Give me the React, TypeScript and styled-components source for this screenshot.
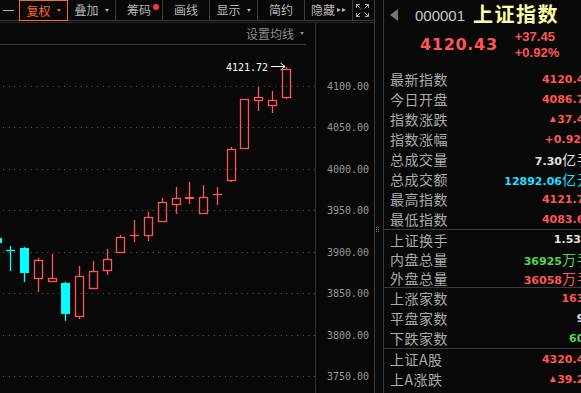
import styled, { createGlobalStyle } from 'styled-components';

const RED = '#ff5555';
const CYAN = '#00ffff';
const GREEN = '#4fd84f';
const WHITE = '#e2e2e2';
const SKY = '#1fe0ff';

const GlobalStyle = createGlobalStyle`
  html, body { margin: 0; padding: 0; background: #080808; overflow: hidden; }
`;

const Screen = styled.div`
  display: flex;
  width: max-content;
  height: 393px;
  overflow: hidden;
  background: #080808;
  font-family: "Noto Sans CJK SC", sans-serif;
`;

const LeftPane = styled.div`
  width: 375px;
  flex: none;
  display: flex;
  flex-direction: column;
  box-sizing: border-box;
  border-right: 1px solid #3a3a3a;
`;

const Toolbar = styled.div`
  display: flex;
  align-items: flex-start;
  height: 21px;
  box-sizing: border-box;
  border-bottom: 1px solid #3c3c3c;
`;

const Tool = styled.div<{ $w: number; $active?: boolean; $plain?: boolean }>`
  position: relative;
  flex: none;
  width: ${p => p.$w}px;
  height: ${p => (p.$active ? 21 : 20)}px;
  box-sizing: border-box;
  display: flex;
  align-items: center;
  justify-content: ${p => (p.$plain ? 'flex-start' : 'center')};
  padding-left: ${p => (p.$plain ? 3 : 0)}px;
  font-size: 12px;
  line-height: 1;
  color: ${p => (p.$active ? '#ff6a1f' : '#b6b6b6')};
  border-right: ${p => (p.$plain ? 'none' : '1px solid #3c3c3c')};
  ${p => p.$active && 'border: 1px solid #ff6a1f;'}
`;

const Dash = styled.span`
  width: 11px;
  height: 1px;
  background: #b0b0b0;
`;

const Caret = styled.span`
  display: inline-block;
  margin-left: 6px;
  border-left: 2.5px solid transparent;
  border-right: 2.5px solid transparent;
  border-top: 3px solid currentColor;
`;

const Play = styled.span`
  display: inline-block;
  margin-left: 2px;
  border-top: 2.5px solid transparent;
  border-bottom: 2.5px solid transparent;
  border-left: 4px solid #b6b6b6;
  & + & { margin-left: 1px; }
`;

const Dot = styled.span`
  position: absolute;
  top: 4px;
  left: 37px;
  width: 6px;
  height: 6px;
  border-radius: 50%;
  background: #ff3535;
`;

const Body = styled.div`
  flex: 1;
  display: flex;
  margin-top: 1px;
  border-top: 1px solid #262626;
  min-height: 0;
`;

const PlotCol = styled.div`
  width: 316px;
  flex: none;
  display: flex;
  flex-direction: column;
  box-sizing: border-box;
  border-right: 1px solid #333;
`;

const ChartHead = styled.div`
  height: 22px;
  box-sizing: border-box;
  margin-right: 9px;
  padding-right: 2px;
  display: flex;
  align-items: center;
  justify-content: flex-end;
  border-bottom: 1px solid #3a3a3a;
  font-size: 12px;
  line-height: 1;
  color: #8c8c8c;
`;

const PlotSvg = styled.svg`
  display: block;
  flex: 1;
`;

const AxisCol = styled.div`
  width: 58px;
  flex: none;
`;

const AxisSvg = styled.svg`
  display: block;
`;

const Splitter = styled.div`
  width: 7px;
  flex: none;
  display: flex;
  flex-direction: column;
  padding-left: 1px;
  background: #0b0b0b;
`;

const Grip = styled.svg`
  margin-top: 227px;
`;

const RightPanel = styled.div`
  width: 214px;
  flex: none;
  box-sizing: border-box;
  border-left: 1px solid #3a3a3a;
  padding: 0 5px 0 6px;
`;

const Header = styled.div`
  height: 69px;
`;

const TitleRow = styled.div`
  height: 30px;
  display: flex;
  align-items: center;
`;

const Code = styled.span`
  margin-left: 17px;
  font-family: "Liberation Sans", Arial, sans-serif;
  font-size: 15px;
  color: #c8c8c8;
`;

const Name = styled.span`
  margin-left: 8px;
  margin-top: -4px;
  font-size: 20px;
  font-weight: 700;
  letter-spacing: 1.5px;
  color: #ffffa6;
`;

const PriceRow = styled.div`
  height: 30px;
  display: flex;
  align-items: center;
  padding-left: 30px;
`;

const Price = styled.span`
  margin-top: -2px;
  font-family: "DejaVu Sans", sans-serif;
  font-weight: 700;
  font-size: 16px;
  letter-spacing: 0.7px;
  color: ${RED};
`;

const Change = styled.div`
  margin-left: 17px;
  display: flex;
  flex-direction: column;
  font-family: "Liberation Sans", Arial, sans-serif;
  font-weight: 700;
  font-size: 13px;
  line-height: 16px;
  color: ${RED};
`;

const Group = styled.div<{ $first?: boolean }>`
  border-top: ${p => (p.$first ? 'none' : '1px solid #3a3a3a')};
  margin: 0 -5px 0 -6px;
  padding: 0 5px 0 6px;
`;

const Row = styled.div<{ $h: number }>`
  height: ${p => p.$h}px;
  display: flex;
  align-items: center;
  justify-content: space-between;
  white-space: nowrap;
`;

const Label = styled.span`
  font-size: 14px;
  letter-spacing: 0.5px;
  color: #ababab;
`;

const Value = styled.span<{ $c: string }>`
  font-family: "DejaVu Sans", sans-serif;
  font-weight: 700;
  font-size: 11px;
  color: ${p => p.$c};
`;

const Unit = styled.span`
  font-family: "Noto Sans CJK SC", sans-serif;
  font-weight: 400;
  font-size: 14px;
  letter-spacing: 1px;
`;

const Up = styled.span`
  display: inline-block;
  margin-right: 1px;
  vertical-align: 1px;
  border-left: 3px solid transparent;
  border-right: 3px solid transparent;
  border-bottom: 6px solid currentColor;
`;

type Kind = 'hollow' | 'solid' | 'cross';
type Candle = [number, Kind, number, number, number, number, string];

const CANDLES: Candle[] = [
  [-7, 'solid', 238, 243, 238, 243, CYAN],
  [6, 'cross', 250, 250, 246, 271, CYAN],
  [20, 'solid', 248, 273, 247, 282, CYAN],
  [34, 'hollow', 260, 278, 258, 292, RED],
  [48, 'hollow', 278, 281, 254, 281, RED],
  [61, 'solid', 283, 314, 282, 321, CYAN],
  [75, 'hollow', 276, 316, 266, 319, RED],
  [89, 'hollow', 271, 288, 261, 288, RED],
  [103, 'hollow', 259, 270, 249, 275, RED],
  [116, 'hollow', 237, 252, 235, 252, RED],
  [130, 'cross', 235, 235, 220, 242, RED],
  [144, 'hollow', 217, 235, 212, 241, RED],
  [158, 'hollow', 202, 221, 198, 221, RED],
  [172, 'hollow', 198, 204, 187, 214, RED],
  [185, 'solid', 197, 199, 182, 204, RED],
  [199, 'hollow', 197, 213, 185, 213, RED],
  [213, 'cross', 194, 194, 187, 205, RED],
  [227, 'hollow', 149, 180, 147, 182, RED],
  [240, 'hollow', 99, 148, 99, 148, RED],
  [254, 'hollow', 97, 100, 87, 111, RED],
  [268, 'hollow', 100, 105, 91, 113, RED],
  [282, 'hollow', 69, 97, 67, 99, RED],
];

const LEVELS = [4100, 4050, 4000, 3950, 3900, 3850, 3800, 3750];
const priceY = (p: number) => Math.round(85.7 + (4100 - p) * 0.8297) + 0.5;

function CandleMark({ c }: { c: Candle }) {
  const [x, kind, top, bottom, hi, lo, color] = c;
  const cx = x + 4.5;
  if (kind === 'cross') {
    return (
      <g stroke={color} strokeWidth={1.3}>
        <line x1={x} x2={x + 9} y1={top + 0.5} y2={top + 0.5} />
        <line x1={cx} x2={cx} y1={hi} y2={lo} />
      </g>
    );
  }
  if (kind === 'solid') {
    return (
      <g>
        <line x1={cx} x2={cx} y1={hi} y2={lo} stroke={color} strokeWidth={1.3} />
        <rect x={x} y={top} width={9} height={Math.max(bottom - top, 2)} fill={color} />
      </g>
    );
  }
  return (
    <g stroke={color} strokeWidth={1.3} fill="none">
      {hi < top && <line x1={cx} x2={cx} y1={hi} y2={top} />}
      {lo > bottom && <line x1={cx} x2={cx} y1={bottom} y2={lo} />}
      <rect x={x + 0.5} y={top + 0.5} width={8} height={bottom - top} />
    </g>
  );
}

function Plot() {
  return (
    <PlotSvg width={315} height={348} viewBox="0 45 315 348">
      {LEVELS.map(p => (
        <line key={p} x1={3} x2={316} y1={priceY(p)} y2={priceY(p)} stroke="#5c5c5c" strokeWidth={1} strokeDasharray="1 4.55" />
      ))}
      {CANDLES.map((c, i) => (
        <CandleMark key={i} c={c} />
      ))}
      <text x={226} y={70.5} fill="#ffffff" fontFamily="'DejaVu Sans Mono', monospace" fontSize={10}>
        4121.72
      </text>
      <g stroke="#ffffff" strokeWidth={1} fill="none">
        <line x1={271} x2={285} y1={66.5} y2={66.5} />
        <polyline points="280.5,63 285,66.5 280.5,70" />
      </g>
    </PlotSvg>
  );
}

function Axis() {
  return (
    <AxisSvg width={58} height={370} viewBox="316 23 58 370">
      {LEVELS.map(p => (
        <text key={p} x={327} y={priceY(p) + 3.6} fill="#979797" fontFamily="'DejaVu Sans Mono', monospace" fontSize={10}>
          {p.toFixed(2)}
        </text>
      ))}
    </AxisSvg>
  );
}

const FullIcon = () => (
  <svg width={13} height={13} viewBox="0 0 13 13" fill="none" stroke="#aaaaaa" strokeWidth={1}>
    <path d="M0.5 4V0.5H4M0.5 0.5L4.5 4.5" />
    <path d="M9 0.5H12.5V4M12.5 0.5L8.5 4.5" />
    <path d="M0.5 9V12.5H4M0.5 12.5L4.5 8.5" />
    <path d="M9 12.5H12.5V9M12.5 12.5L8.5 8.5" />
  </svg>
);

type Stat = { label: string; value: string; color: string; unit?: string; up?: boolean };

const GROUPS: { h: number; rows: Stat[] }[] = [
  {
    h: 20,
    rows: [
      { label: '最新指数', value: '4120.43', color: RED },
      { label: '今日开盘', value: '4086.72', color: RED },
      { label: '指数涨跌', value: '37.45', color: RED, up: true },
      { label: '指数涨幅', value: '+0.92%', color: RED },
      { label: '总成交量', value: '7.30', unit: '亿手', color: WHITE },
      { label: '总成交额', value: '12892.06', unit: '亿元', color: SKY },
      { label: '最高指数', value: '4121.72', color: RED },
      { label: '最低指数', value: '4083.67', color: RED },
    ],
  },
  {
    h: 19,
    rows: [
      { label: '上证换手', value: '1.53%', color: WHITE },
      { label: '内盘总量', value: '36925', unit: '万手', color: GREEN },
      { label: '外盘总量', value: '36058', unit: '万手', color: RED },
    ],
  },
  {
    h: 20,
    rows: [
      { label: '上涨家数', value: '1632', color: RED },
      { label: '平盘家数', value: '96', color: WHITE },
      { label: '下跌家数', value: '602', color: GREEN },
    ],
  },
  {
    h: 20,
    rows: [
      { label: '上证A股', value: '4320.48', color: RED },
      { label: '上A涨跌', value: '39.28', color: RED, up: true },
      { label: '上证B股', value: '276.41', color: RED },
    ],
  },
];

export default function App() {
  return (
    <>
      <GlobalStyle />
      <Screen>
        <LeftPane>
          <Toolbar>
            <Tool $w={19} $plain>
              <Dash />
            </Tool>
            <Tool $w={49} $active>
              复权<Caret />
            </Tool>
            <Tool $w={48}>
              叠加<Caret />
            </Tool>
            <Tool $w={47}>
              筹码<Dot />
            </Tool>
            <Tool $w={47}>画线</Tool>
            <Tool $w={48}>
              显示<Caret />
            </Tool>
            <Tool $w={47}>简约</Tool>
            <Tool $w={48}>
              隐藏<Play /><Play />
            </Tool>
            <Tool $w={21} $plain>
              <FullIcon />
            </Tool>
          </Toolbar>
          <Body>
            <PlotCol>
              <ChartHead>
                设置均线<Caret />
              </ChartHead>
              <Plot />
            </PlotCol>
            <AxisCol>
              <Axis />
            </AxisCol>
          </Body>
        </LeftPane>
        <Splitter>
          <Grip width={3} height={6} viewBox="0 0 3 6">
            {[0, 2, 4].map(y => (
              <g key={y} fill="#7a7a7a">
                <rect x={0} y={y} width={1} height={1} />
                <rect x={2} y={y} width={1} height={1} />
              </g>
            ))}
          </Grip>
        </Splitter>
        <RightPanel>
          <Header>
            <TitleRow>
              <svg width={8} height={12} viewBox="0 0 8 12">
                <polygon points="8,0 8,12 0,6" fill="#777777" />
              </svg>
              <Code>000001</Code>
              <Name>上证指数</Name>
            </TitleRow>
            <PriceRow>
              <Price>4120.43</Price>
              <Change>
                <span>+37.45</span>
                <span>+0.92%</span>
              </Change>
            </PriceRow>
          </Header>
          {GROUPS.map((g, gi) => (
            <Group key={gi} $first={gi === 0}>
              {g.rows.map(r => (
                <Row key={r.label} $h={g.h}>
                  <Label>{r.label}</Label>
                  <Value $c={r.color}>
                    {r.up && <Up />}
                    {r.value}
                    {r.unit && <Unit>{r.unit}</Unit>}
                  </Value>
                </Row>
              ))}
            </Group>
          ))}
        </RightPanel>
      </Screen>
    </>
  );
}
